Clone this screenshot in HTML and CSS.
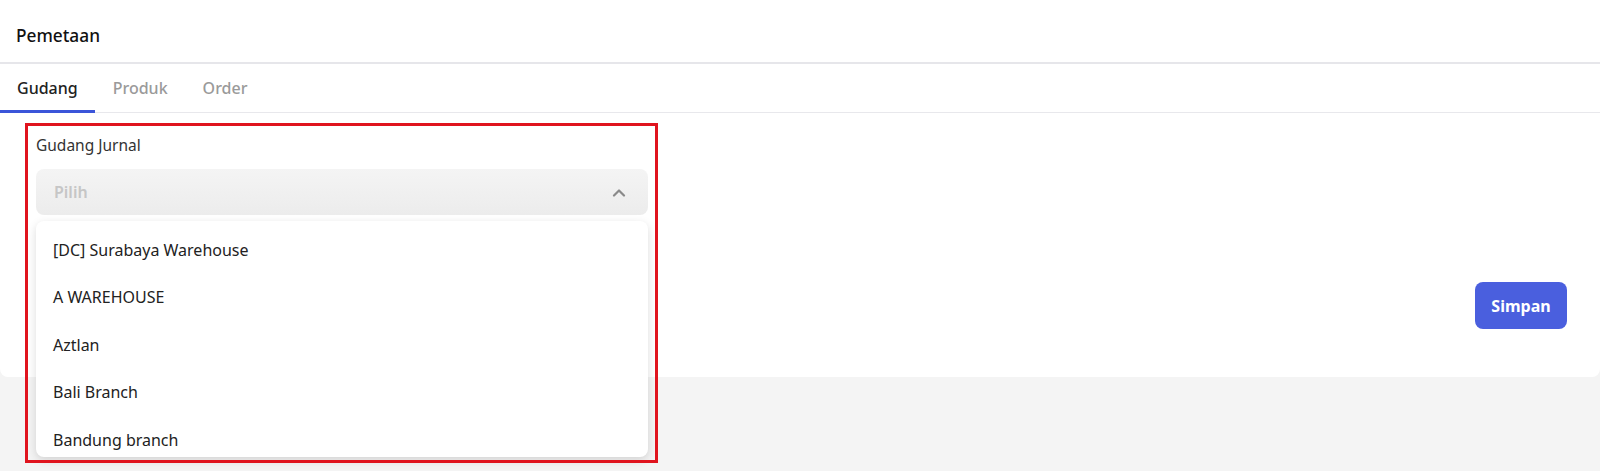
FILE: index.html
```html
<!DOCTYPE html>
<html lang="id">
<head>
<meta charset="utf-8">
<title>Pemetaan</title>
<link rel="stylesheet" href="styles.css">
</head>
<body>
<div class="card">
  <div class="card-header">Pemetaan</div>
  <div class="tabs">
    <div class="tab active">Gudang</div>
    <div class="tab">Produk</div>
    <div class="tab">Order</div>
  </div>
  <div class="card-body">
    <div class="field">
      <div class="label">Gudang Jurnal</div>
      <div class="select-wrap">
        <div class="select">
          <span class="placeholder">Pilih</span>
          <svg class="chevron" width="14" height="9" viewBox="0 0 14 9"><path d="M2 7.5 L7 2.5 L12 7.5" fill="none" stroke="#8a8a8a" stroke-width="2.2" stroke-linecap="round" stroke-linejoin="round"/></svg>
        </div>
        <div class="menu">
          <div class="option">[DC] Surabaya Warehouse</div>
          <div class="option">A WAREHOUSE</div>
          <div class="option">Aztlan</div>
          <div class="option">Bali Branch</div>
          <div class="option">Bandung branch</div>
        </div>
      </div>
      <div class="highlight"></div>
    </div>
    <div class="actions">
      <button class="btn-primary">Simpan</button>
    </div>
  </div>
</div>
</body>
</html>
```
FILE: styles.css
```css
* { box-sizing: border-box; }
html, body { margin: 0; padding: 0; }
body {
  background: #f4f4f4;
  font-family: "Noto Sans", "Open Sans", sans-serif;
  color: #222;
  height: 471px;
  overflow: hidden;
}
.card {
  background: #fff;
  border-radius: 0 0 8px 8px;
  height: 377px;
}
.card-header {
  height: 64px;
  padding: 8px 16px 0;
  display: flex;
  align-items: center;
  font-size: 17.3px;
  font-weight: 500;
  color: #111;
  border-bottom: 2px solid #e6e6ea;
}
.tabs {
  display: flex;
  height: 49px;
  border-bottom: 1px solid #e8e8ec;
}
.tab {
  padding: 2px 17px 0;
  display: flex;
  align-items: center;
  font-size: 16px;
  font-weight: 500;
  color: #9a9a9a;
  border-bottom: 3px solid transparent;
  margin-bottom: -1px;
}
.tab + .tab { padding-left: 18px; }
.tab.active {
  color: #222;
  border-bottom-color: #3b55d9;
}
.card-body {
  display: flex;
  justify-content: space-between;
  padding: 0 33px 0 36px;
}
.field {
  position: relative;
  width: 612px;
  padding-top: 21px;
}
.label {
  font-size: 15.5px;
  color: #333;
  height: 22px;
  line-height: 22px;
}
.select-wrap {
  position: relative;
  margin-top: 13px;
}
.select {
  height: 46px;
  border-radius: 8px;
  background: linear-gradient(#f4f4f4, #ececec);
  display: flex;
  align-items: center;
  justify-content: space-between;
  padding: 0 22px 0 18px;
}
.placeholder {
  font-size: 16px;
  font-weight: 600;
  color: #c6c6c6;
}
.chevron { display: block; }
.menu {
  position: absolute;
  left: 0;
  right: 0;
  top: 52px;
  background: #fff;
  border-radius: 8px;
  box-shadow: 0 3px 10px rgba(0,0,0,0.14);
  padding: 5px 0 0;
  height: 236px;
  overflow: hidden;
  z-index: 2;
}
.option {
  height: 47.5px;
  display: flex;
  align-items: center;
  padding: 0 17px;
  font-size: 16px;
  color: #222;
}
.highlight {
  position: absolute;
  left: -11px;
  top: 10px;
  width: 633px;
  height: 340px;
  border: 3px solid #e0141e;
  z-index: 3;
  pointer-events: none;
}
.actions {
  padding-top: 169px;
}
.btn-primary {
  width: 92px;
  height: 47px;
  border: none;
  border-radius: 8px;
  background: #4a5fde;
  color: #fff;
  font-family: "Noto Sans", sans-serif;
  font-size: 16px;
  font-weight: 700;
}
```
